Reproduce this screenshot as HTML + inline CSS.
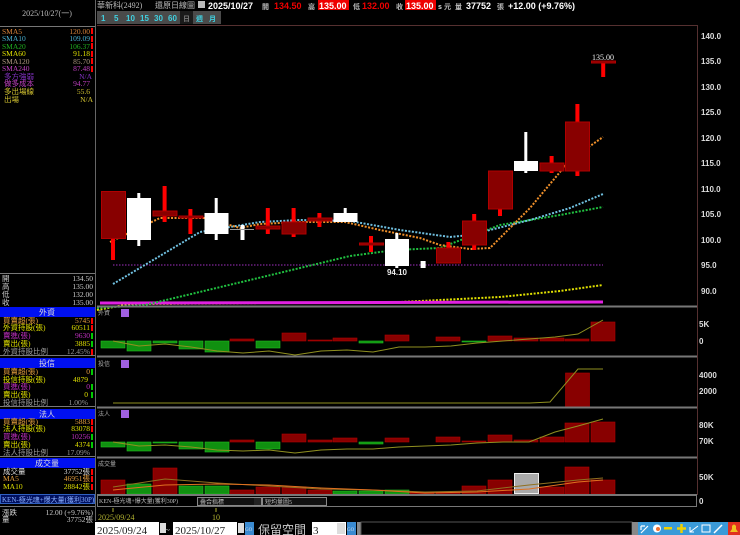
<!DOCTYPE html>
<html><head><meta charset="utf-8"><style>
body{margin:0;background:#000;width:740px;height:535px;overflow:hidden;font-family:"Liberation Sans","Noto Sans CJK TC",sans-serif}
svg{position:absolute;left:0;top:0}
text{font-family:"Liberation Serif","Noto Sans CJK TC",serif}
.s{font-size:7.5px}
.b,.b text,text.b{font-family:"Liberation Sans","Noto Sans CJK TC",sans-serif;font-weight:bold}
</style></head><body>
<svg width="740" height="535" viewBox="0 0 740 535">
<rect width="740" height="535" fill="#000"/>
<!-- left panel -->
<line x1="95.5" y1="0" x2="95.5" y2="521" stroke="#666"/>
<text x="47" y="16" fill="#bbb" font-size="8" text-anchor="middle">2025/10/27(一)</text>
<line x1="0" y1="26.5" x2="95" y2="26.5" stroke="#777"/>
<g class="s">
<text x="2" y="34" fill="#d8833a">SMA5</text><text x="90" y="34" fill="#d8833a" text-anchor="end">120.00</text>
<text x="2" y="41" fill="#4ab0d0">SMA10</text><text x="90" y="41" fill="#4ab0d0" text-anchor="end">109.09</text>
<text x="2" y="49" fill="#20b020">SMA20</text><text x="90" y="49" fill="#20b020" text-anchor="end">106.37</text>
<text x="2" y="56" fill="#e0e000">SMA60</text><text x="90" y="56" fill="#e0e000" text-anchor="end">91.18</text>
<text x="2" y="64" fill="#b09880">SMA120</text><text x="90" y="64" fill="#b09880" text-anchor="end">85.70</text>
<text x="2" y="71" fill="#c040c0">SMA240</text><text x="90" y="71" fill="#c040c0" text-anchor="end">87.48</text>
<text x="4" y="79" fill="#8030c0">多方強弱</text><text x="92" y="79" fill="#8030c0" text-anchor="end">N/A</text>
<text x="4" y="86" fill="#c040c0">做多成本</text><text x="90" y="86" fill="#c040c0" text-anchor="end">94.77</text>
<text x="4" y="94" fill="#d0c030">多出場線</text><text x="90" y="94" fill="#d0c030" text-anchor="end">55.6</text>
<text x="4" y="102" fill="#d0c030">出場</text><text x="93" y="102" fill="#d0c030" text-anchor="end">N/A</text>
</g>
<g fill="#f00"><rect x="91" y="28" width="2" height="6"/><rect x="91" y="36" width="2" height="6"/><rect x="91" y="43" width="2" height="6"/><rect x="91" y="51" width="2" height="6"/><rect x="91" y="58" width="2" height="6"/><rect x="91" y="66" width="2" height="6"/></g>
<line x1="0" y1="273.5" x2="95" y2="273.5" stroke="#777"/>
<g class="s" fill="#ccc">
<text x="2" y="281">開</text><text x="93" y="281" text-anchor="end">134.50</text>
<text x="2" y="289">高</text><text x="93" y="289" text-anchor="end">135.00</text>
<text x="2" y="297">低</text><text x="93" y="297" text-anchor="end">132.00</text>
<text x="2" y="305">收</text><text x="93" y="305" text-anchor="end">135.00</text>
</g>
<g>
<rect x="0" y="307" width="95" height="10" fill="#0010f0"/><text x="47" y="315" fill="#ddd" font-size="8" text-anchor="middle">外資</text>
<rect x="0" y="358" width="95" height="10" fill="#0010f0"/><text x="47" y="366" fill="#ddd" font-size="8" text-anchor="middle">投信</text>
<rect x="0" y="409" width="95" height="10" fill="#0010f0"/><text x="47" y="417" fill="#ddd" font-size="8" text-anchor="middle">法人</text>
<rect x="0" y="458" width="95" height="10" fill="#0010f0"/><text x="47" y="466" fill="#ddd" font-size="8" text-anchor="middle">成交量</text>
</g>
<line x1="0" y1="355.5" x2="95" y2="355.5" stroke="#777"/>
<line x1="0" y1="406.5" x2="95" y2="406.5" stroke="#777"/>
<line x1="0" y1="456.5" x2="95" y2="456.5" stroke="#777"/>
<g class="s">
<text x="3" y="323" fill="#e8a040">買賣超(張)</text><text x="90" y="323" fill="#e8a040" text-anchor="end">5745</text>
<text x="3" y="330" fill="#e0e000">外資持股(張)</text><text x="90" y="330" fill="#e0e000" text-anchor="end">60511</text>
<text x="3" y="338" fill="#c030c0">賣進(張)</text><text x="90" y="338" fill="#c030c0" text-anchor="end">9630</text>
<text x="3" y="346" fill="#e0e000">賣出(張)</text><text x="90" y="346" fill="#e0e000" text-anchor="end">3885</text>
<text x="3" y="354" fill="#999">外資持股比例</text><text x="90" y="354" fill="#999" text-anchor="end">12.45%</text>
<text x="3" y="374" fill="#e8a040">買賣超(張)</text><text x="90" y="374" fill="#e8a040" text-anchor="end">0</text>
<text x="3" y="382" fill="#e0e000">投信持股(張)</text><text x="88" y="382" fill="#e0e000" text-anchor="end">4879</text>
<text x="3" y="389" fill="#c030c0">買進(張)</text><text x="90" y="389" fill="#c030c0" text-anchor="end">0</text>
<text x="3" y="397" fill="#e0e000">賣出(張)</text><text x="88" y="397" fill="#e0e000" text-anchor="end">0</text>
<text x="3" y="405" fill="#999">投信持股比例</text><text x="88" y="405" fill="#999" text-anchor="end">1.00%</text>
<text x="3" y="424" fill="#e8a040">買賣超(張)</text><text x="90" y="424" fill="#e8a040" text-anchor="end">5883</text>
<text x="3" y="431" fill="#e0e000">法人持股(張)</text><text x="90" y="431" fill="#e0e000" text-anchor="end">83078</text>
<text x="3" y="439" fill="#c030c0">買進(張)</text><text x="90" y="439" fill="#c030c0" text-anchor="end">10256</text>
<text x="3" y="447" fill="#e0e000">賣出(張)</text><text x="90" y="447" fill="#e0e000" text-anchor="end">4374</text>
<text x="3" y="455" fill="#999">法人持股比例</text><text x="90" y="455" fill="#999" text-anchor="end">17.09%</text>
<text x="3" y="474" fill="#ddd">成交量</text><text x="90" y="474" fill="#ddd" text-anchor="end">37752張</text>
<text x="3" y="481" fill="#e8a040">MA5</text><text x="90" y="481" fill="#e8a040" text-anchor="end">46951張</text>
<text x="3" y="489" fill="#e0e000">MA10</text><text x="90" y="489" fill="#e0e000" text-anchor="end">28842張</text>
</g>
<g fill="#f00"><rect x="91" y="318" width="2" height="6"/><rect x="91" y="325" width="2" height="6"/><rect x="91" y="419" width="2" height="6"/><rect x="91" y="426" width="2" height="6"/><rect x="91" y="349" width="2" height="6"/><rect x="91" y="469" width="2" height="6"/><rect x="91" y="476" width="2" height="6"/><rect x="91" y="484" width="2" height="6"/></g>
<g fill="#0c0"><rect x="91" y="333" width="2" height="6"/><rect x="91" y="341" width="2" height="6"/><rect x="91" y="434" width="2" height="6"/><rect x="91" y="442" width="2" height="6"/><rect x="91" y="384" width="2" height="6"/><rect x="91" y="392" width="2" height="6"/><rect x="91" y="369" width="2" height="6"/></g>
<rect x="0.5" y="494.5" width="94" height="9" fill="#001060" stroke="#3060c0"/>
<text x="2" y="502" fill="#8ab0ff" font-size="7">KEN-極光魂+爆大量(獲利30P)</text>
<line x1="0" y1="506.5" x2="95" y2="506.5" stroke="#777"/>
<g class="s" fill="#ccc">
<text x="2" y="515">漲跌</text><text x="93" y="515" text-anchor="end">12.00 (+9.76%)</text>
<text x="2" y="522">量</text><text x="93" y="522" text-anchor="end">37752張</text>
</g>

<!-- top title -->
<text x="97" y="8" fill="#bbb" font-size="8">華新科(2492)</text>
<text x="155" y="8" fill="#bbb" font-size="8">還原日線圖</text>
<rect x="198" y="1" width="7" height="7" fill="#bbb"/>
<g class="b" font-size="9">
<text x="208" y="9" fill="#fff">2025/10/27</text>
<text x="262" y="9" fill="#bbb" font-size="7" font-weight="normal">開</text>
<text x="274" y="9" fill="#e00">134.50</text>
<text x="308" y="9" fill="#bbb" font-size="7" font-weight="normal">高</text>
<rect x="318" y="0" width="31" height="10" fill="#e00"/><text x="319" y="9" fill="#fff">135.00</text>
<text x="353" y="9" fill="#bbb" font-size="7" font-weight="normal">低</text>
<text x="362" y="9" fill="#e00">132.00</text>
<text x="396" y="9" fill="#bbb" font-size="7" font-weight="normal">收</text>
<rect x="405" y="0" width="31" height="10" fill="#e00"/><text x="406" y="9" fill="#fff">135.00</text>
<text x="438" y="9" fill="#ddd" font-size="7">s</text><text x="444" y="9" fill="#bbb" font-size="7" font-weight="normal">元</text>
<text x="455" y="9" fill="#bbb" font-size="7" font-weight="normal">量</text>
<text x="466" y="9" fill="#fff">37752</text>
<text x="497" y="9" fill="#bbb" font-size="7" font-weight="normal">張</text>
<text x="508" y="9" fill="#fff">+12.00 (+9.76%)</text>
</g>
<g font-size="8" class="b">
<rect x="97" y="11" width="124" height="13" fill="#4a4a4a"/>
<text x="101" y="21" fill="#40d0e0">1</text><text x="114" y="21" fill="#40d0e0">5</text>
<text x="126" y="21" fill="#40d0e0">10</text><text x="140" y="21" fill="#40d0e0">15</text>
<text x="154" y="21" fill="#40d0e0">30</text><text x="168" y="21" fill="#40d0e0">60</text>
<rect x="180" y="11" width="13" height="13" fill="#1a1a1a"/><text x="183" y="21" fill="#777" font-size="7" font-weight="normal">日</text>
<text x="196" y="21" fill="#40d0e0" font-size="7" font-weight="normal">週</text>
<text x="209" y="21" fill="#40d0e0" font-size="7" font-weight="normal">月</text>
</g>

<line x1="97" y1="25.5" x2="697" y2="25.5" stroke="#553030"/>
<line x1="697.5" y1="25" x2="697.5" y2="495" stroke="#553030"/>
<g fill="#ddd" font-size="8" class="b">
<text x="701" y="39">140.0</text><text x="701" y="64">135.0</text><text x="701" y="90">130.0</text>
<text x="701" y="115">125.0</text><text x="701" y="141">120.0</text><text x="701" y="166">115.0</text>
<text x="701" y="192">110.0</text><text x="701" y="217">105.0</text><text x="701" y="243">100.0</text>
<text x="701" y="268">95.0</text><text x="701" y="294">90.0</text>
</g>
<line x1="113" y1="265" x2="603" y2="265" stroke="#a030c0" stroke-dasharray="1.5 1.5"/>
<polyline points="97,310 130,304 400,302 500,297 560,291 603,285" fill="none" stroke="#e0e000" stroke-width="2" stroke-dasharray="2 1.5"/>
<polyline points="100,303 603,302" fill="none" stroke="#e020e0" stroke-width="3"/>
<polyline points="97,308 145,305 250,280 350,256 395,250 440,248 500,225 560,215 603,207" fill="none" stroke="#20c040" stroke-width="2" stroke-dasharray="2 1.5"/>
<polyline points="113,284 200,232 260,222 300,220 350,221 400,230 450,237 470,235 530,220 570,208 603,194" fill="none" stroke="#70c0e0" stroke-width="2" stroke-dasharray="2 1.5"/>
<polyline points="110,242 160,218 205,218 240,228 260,224 300,222 345,222 380,230 420,238 440,245 470,249 490,248 530,208 570,160 603,137" fill="none" stroke="#f0902a" stroke-width="2" stroke-dasharray="2 1.5"/>
<g fill="#f00">
<rect x="111" y="191" width="4" height="69"/>
<rect x="162.6" y="186" width="4" height="36"/>
<rect x="188.4" y="209" width="4" height="25"/>
<rect x="265.8" y="208" width="4" height="26"/>
<rect x="291.6" y="208" width="4" height="29"/>
<rect x="317.4" y="213" width="4" height="14"/>
<rect x="369" y="236" width="4" height="16"/>
<rect x="446.4" y="242" width="4" height="10"/>
<rect x="472.2" y="214" width="4" height="36"/>
<rect x="498" y="190" width="4" height="26"/>
<rect x="549.6" y="156" width="4" height="17"/>
<rect x="575.4" y="104" width="4" height="72"/>
<rect x="601.2" y="62" width="4" height="15"/>
</g>
<g fill="#880000" stroke="#b00000" stroke-width="1">
<rect x="101.5" y="191.5" width="24" height="47"/>
<rect x="153" y="211" width="24" height="5"/>
<rect x="179" y="216" width="24" height="2"/>
<rect x="256" y="226" width="24" height="3"/>
<rect x="282" y="222" width="24" height="12"/>
<rect x="308" y="218" width="24" height="3"/>
<rect x="359.5" y="243" width="24" height="2"/>
<rect x="436.5" y="248" width="24" height="15"/>
<rect x="462.5" y="221" width="24" height="24"/>
<rect x="488.5" y="171" width="24" height="38"/>
<rect x="540" y="163" width="24" height="8"/>
<rect x="565.5" y="122" width="24" height="49"/>
<rect x="591.5" y="61" width="24" height="2"/>
</g>
<g fill="#fff">
<rect x="137.3" y="193" width="3" height="53"/><rect x="127" y="198" width="24" height="42"/>
<rect x="214.7" y="198" width="3" height="42"/><rect x="204.5" y="213" width="24" height="21"/>
<rect x="240.5" y="225" width="4" height="15"/><rect x="230" y="229" width="24" height="1" fill="#999"/>
<rect x="343.7" y="208" width="3" height="14"/><rect x="333.5" y="213" width="24" height="9"/>
<rect x="395.3" y="233" width="3" height="35"/><rect x="385" y="239" width="24" height="27"/>
<rect x="420.6" y="261" width="5" height="7"/>
<rect x="524.3" y="132" width="3" height="41"/><rect x="514" y="161" width="24" height="10"/>
</g>
<text x="397" y="275" fill="#eee" font-size="8" class="b" text-anchor="middle">94.10</text>
<text x="603" y="60" fill="#eee" font-size="8" text-anchor="middle">135.00</text>
<line x1="97" y1="306.5" x2="697" y2="306.5" stroke="#777" stroke-width="2"/>

<text x="98" y="315" fill="#aaa" font-size="6">外資</text><rect x="121" y="309" width="8" height="8" fill="#a060e0"/>
<g fill="#ddd" font-size="8" class="b"><text x="699" y="327">5K</text><text x="699" y="344">0</text></g>
<g fill="#109010" stroke="#20c020" stroke-width=".6">
<rect x="101" y="341" width="24" height="7"/><rect x="127" y="341" width="24" height="10"/><rect x="153" y="341" width="24" height="2"/><rect x="179" y="341" width="24" height="8"/><rect x="205" y="341" width="24" height="11"/><rect x="256" y="341" width="24" height="7"/><rect x="359" y="341" width="24" height="2"/><rect x="462" y="341" width="24" height="1"/>
</g>
<g fill="#880000" stroke="#b00000" stroke-width=".6">
<rect x="230" y="339" width="24" height="2"/><rect x="282" y="333" width="24" height="8"/><rect x="308" y="340" width="24" height="1"/><rect x="333" y="338" width="24" height="3"/><rect x="385" y="335" width="24" height="6"/><rect x="436" y="337" width="24" height="4"/><rect x="488" y="336" width="24" height="5"/><rect x="514" y="338" width="24" height="3"/><rect x="540" y="338" width="24" height="3"/><rect x="565" y="339" width="24" height="2"/><rect x="591" y="322" width="24" height="19"/>
</g>
<polyline points="113,341 139,346 165,344 191,347 217,351 243,353 269,351 295,355 321,351 347,350 373,352 399,347 425,347 451,346 477,343 503,341 529,339 555,337 578,334 603,320" fill="none" stroke="#909020" stroke-width="1"/>
<line x1="97" y1="356.5" x2="697" y2="356.5" stroke="#777" stroke-width="2"/>
<text x="98" y="366" fill="#aaa" font-size="6">投信</text><rect x="121" y="360" width="8" height="8" fill="#a060e0"/>
<g fill="#ddd" font-size="8" class="b"><text x="699" y="378">4000</text><text x="699" y="394">2000</text></g>
<rect x="565.5" y="373" width="24" height="34" fill="#880000" stroke="#b00000" stroke-width=".6"/>
<polyline points="113,403 530,403 550,402 578,369 603,369" fill="none" stroke="#909020"/>
<line x1="97" y1="407.5" x2="697" y2="407.5" stroke="#777" stroke-width="2"/>
<text x="98" y="416" fill="#aaa" font-size="6">法人</text><rect x="121" y="410" width="8" height="8" fill="#a060e0"/>
<g fill="#ddd" font-size="8" class="b"><text x="699" y="428">80K</text><text x="699" y="444">70K</text></g>
<g fill="#109010" stroke="#20c020" stroke-width=".6">
<rect x="101" y="442" width="24" height="5"/><rect x="127" y="442" width="24" height="9"/><rect x="153" y="442" width="24" height="1"/><rect x="179" y="442" width="24" height="7"/><rect x="205" y="442" width="24" height="10"/><rect x="256" y="442" width="24" height="7"/><rect x="359" y="442" width="24" height="2"/>
</g>
<g fill="#880000" stroke="#b00000" stroke-width=".6">
<rect x="230" y="440" width="24" height="2"/><rect x="282" y="434" width="24" height="8"/><rect x="308" y="440" width="24" height="2"/><rect x="333" y="438" width="24" height="4"/><rect x="385" y="438" width="24" height="4"/><rect x="436" y="437" width="24" height="5"/><rect x="462" y="441" width="24" height="1"/><rect x="488" y="435" width="24" height="7"/><rect x="514" y="440" width="24" height="2"/><rect x="540" y="437" width="24" height="5"/><rect x="565" y="423" width="24" height="19"/><rect x="591" y="422" width="24" height="20"/>
</g>
<polyline points="113,442 139,446 165,445 191,447 217,450 243,451 269,450 295,453 321,450 347,449 373,449 399,447 425,446 451,445 477,443 503,442 529,442 555,432 578,426 603,419" fill="none" stroke="#909020"/>
<line x1="97" y1="457.5" x2="697" y2="457.5" stroke="#777" stroke-width="2"/>
<text x="98" y="466" fill="#aaa" font-size="6">成交量</text>
<g fill="#ddd" font-size="8" class="b"><text x="699" y="480">50K</text><text x="699" y="504">0</text></g>
<g fill="#109010" stroke="#20c020" stroke-width=".6">
<rect x="127" y="484" width="24" height="10"/><rect x="179" y="486" width="24" height="8"/><rect x="205" y="486" width="24" height="8"/><rect x="333" y="491" width="24" height="3"/><rect x="359" y="491" width="24" height="3"/><rect x="385" y="490" width="24" height="4"/>
</g>
<g fill="#880000" stroke="#b00000" stroke-width=".6">
<rect x="101" y="480" width="24" height="14"/><rect x="153" y="468" width="24" height="26"/><rect x="230" y="490" width="24" height="4"/><rect x="256" y="487" width="24" height="7"/><rect x="282" y="487" width="24" height="7"/><rect x="308" y="490" width="24" height="4"/><rect x="410" y="492" width="24" height="2"/><rect x="436" y="492" width="24" height="2"/><rect x="462" y="486" width="24" height="8"/><rect x="488" y="480" width="24" height="14"/><rect x="540" y="487" width="24" height="7"/><rect x="565" y="467" width="24" height="27"/><rect x="591" y="480" width="24" height="14"/>
</g>
<rect x="514.5" y="473.5" width="24" height="20" fill="#aaa" stroke="#eee"/>
<polyline points="113,487 165,479 217,483 269,486 321,489 373,490 425,492 477,491 529,485 578,480 603,478" fill="none" stroke="#907020"/>
<polyline points="113,490 165,485 217,484 269,485 321,488 373,490 425,493 477,492 529,489 578,482 603,480" fill="none" stroke="#e07020"/>
<line x1="97" y1="494.5" x2="697" y2="494.5" stroke="#777"/>
<rect x="97.5" y="495.5" width="599" height="11" fill="#000" stroke="#777"/>
<text x="99" y="503" fill="#bbb" font-size="6">KEN-極光魂+爆大量(獲利30P)</text>
<rect x="197.5" y="497.5" width="64" height="8" fill="#111" stroke="#888"/><text x="200" y="504" fill="#bbb" font-size="6">叠合指標</text><rect x="254" y="498" width="7" height="7" fill="#222"/>
<rect x="262.5" y="497.5" width="64" height="8" fill="#111" stroke="#888"/><text x="265" y="504" fill="#bbb" font-size="6">短均量圖5</text>
<text x="98" y="520" fill="#b0b030" font-size="8">2025/09/24</text>
<text x="212" y="520" fill="#b0b030" font-size="8">10</text>
<line x1="113" y1="508" x2="113" y2="512" stroke="#b0b030"/><line x1="216" y1="508" x2="216" y2="512" stroke="#b0b030"/>

<rect x="95" y="521" width="645" height="14" fill="#000"/>
<rect x="95" y="522" width="64" height="13" fill="#fff"/><text x="97" y="534" fill="#222" font-size="11">2025/09/24</text>
<rect x="160" y="523" width="6" height="10" fill="#ddd"/>
<text x="165" y="533" fill="#ccc" font-size="9">~</text>
<rect x="173" y="522" width="64" height="13" fill="#fff"/><text x="175" y="534" fill="#222" font-size="11">2025/10/27</text>
<rect x="238" y="523" width="6" height="10" fill="#ddd"/>
<rect x="245" y="522" width="9" height="13" fill="#3a8ad0"/><text x="245" y="531" fill="#cde" font-size="5">GO</text>
<text x="258" y="534" fill="#ccc" font-size="12" font-family="Liberation Sans, Noto Sans CJK TC, sans-serif">保留空間</text>
<rect x="312" y="522" width="34" height="13" fill="#fff"/><text x="313" y="534" fill="#222" font-size="11">3</text>
<rect x="337" y="523" width="8" height="11" fill="#ddd"/>
<rect x="347" y="522" width="9" height="13" fill="#3a8ad0"/><text x="347" y="531" fill="#cde" font-size="5">GO</text>
<rect x="357" y="522" width="4" height="13" fill="#888"/>
<rect x="361" y="522" width="271" height="13" fill="#000" stroke="#555"/>
<rect x="632" y="522" width="6" height="13" fill="#888"/>
<rect x="638" y="522" width="90" height="13" fill="#3a9ad8"/>
<path d="M641 533 L648 526 M641 526 H645 M641 526 V530" stroke="#fff" stroke-width="1.2" fill="none"/>
<circle cx="657" cy="528.5" r="4" fill="#fff"/><circle cx="658" cy="529" r="2" fill="#f07030"/>
<rect x="664" y="527" width="8" height="2.5" fill="#f0d000"/>
<path d="M677 528.5 H686 M681.5 524 V533" stroke="#f0d000" stroke-width="2.5"/>
<path d="M690 532 L698 526 M690 527 V532 H694" stroke="#fff" stroke-width="1" fill="none"/>
<rect x="702" y="525" width="8" height="7" fill="none" stroke="#fff"/>
<path d="M714 533 L722 525" stroke="#fff" stroke-width="1.5"/>
<rect x="728" y="522" width="12" height="13" fill="#e03020"/>
<path d="M730 532 H738 L736 529 V526 Q734 523 732 526 V529 Z" fill="#f0c020"/>
</svg>
</body></html>
